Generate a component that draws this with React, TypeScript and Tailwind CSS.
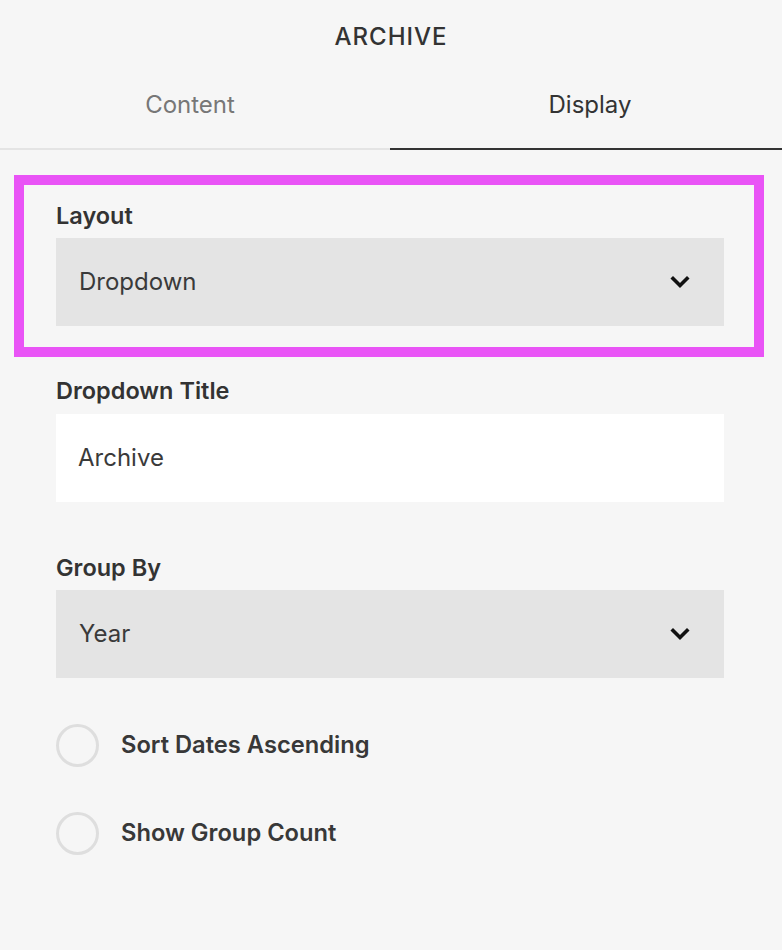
const font = { fontFamily: "Inter, 'Noto Sans', sans-serif" };

function Chevron() {
  return (
    <svg width="20" height="14" viewBox="0 0 20 14" className="shrink-0">
      <path d="M3 3.5 L10 10.5 L17 3.5" fill="none" stroke="#111" strokeWidth="3.6" strokeLinecap="square" />
    </svg>
  );
}

function Select({ value }: { value: string }) {
  return (
    <div className="flex h-[88px] items-center justify-between bg-[#e4e4e4] pl-[23px] pr-[34px]">
      <span className="text-[24px] text-[#3a3a3a]">{value}</span>
      <Chevron />
    </div>
  );
}

function Label({ children }: { children: React.ReactNode }) {
  return <div className="text-[23.5px] font-semibold leading-[28px] text-[#333]">{children}</div>;
}

function Toggle({ label }: { label: string }) {
  return (
    <div className="flex h-[88px] items-center gap-[22px]">
      <div className="h-[43px] w-[43px] rounded-full border-[3px] border-[#dedede]" />
      <span className="text-[23.7px] font-semibold text-[#383838]">{label}</span>
    </div>
  );
}

export default function App() {
  return (
    <div className="min-h-[950px] w-[782px] bg-[#f6f6f6]" style={font}>
      {/* Header */}
      <div className="flex h-[74px] items-center justify-center">
        <span className="text-[24px] font-medium tracking-[0.04em] text-[#333]">ARCHIVE</span>
      </div>

      {/* Tabs */}
      <div className="flex h-[76px]">
        <div className="flex w-[390px] shrink-0 items-start justify-center border-b-2 border-[#e4e4e4] pr-[10px] pt-[13px]">
          <span className="text-[24px] text-[#777]">Content</span>
        </div>
        <div className="flex flex-1 items-start justify-center border-b-2 border-[#333] pl-[8px] pt-[13px]">
          <span className="text-[24px] text-[#333]">Display</span>
        </div>
      </div>

      {/* Fields */}
      <div className="pt-[25px]">
        <div className="ml-[14px] mr-[18px] border-[10px] border-[#e954f6] pb-[21px] pl-[32px] pr-[30px] pt-[17px]">
          <Label>Layout</Label>
          <div className="mt-[8px]">
            <Select value="Dropdown" />
          </div>
        </div>

        <div className="ml-[56px] mr-[58px]">
          <div className="mt-[20px]">
            <Label>Dropdown Title</Label>
            <div className="mt-[9px] flex h-[88px] items-center bg-white pl-[22px]">
              <span className="text-[24px] text-[#3a3a3a]">Archive</span>
            </div>
          </div>

          <div className="mt-[52px]">
            <Label>Group By</Label>
            <div className="mt-[8px]">
              <Select value="Year" />
            </div>
          </div>

          <div className="mt-[23px]">
            <Toggle label="Sort Dates Ascending" />
            <Toggle label="Show Group Count" />
          </div>
        </div>
      </div>
    </div>
  );
}
